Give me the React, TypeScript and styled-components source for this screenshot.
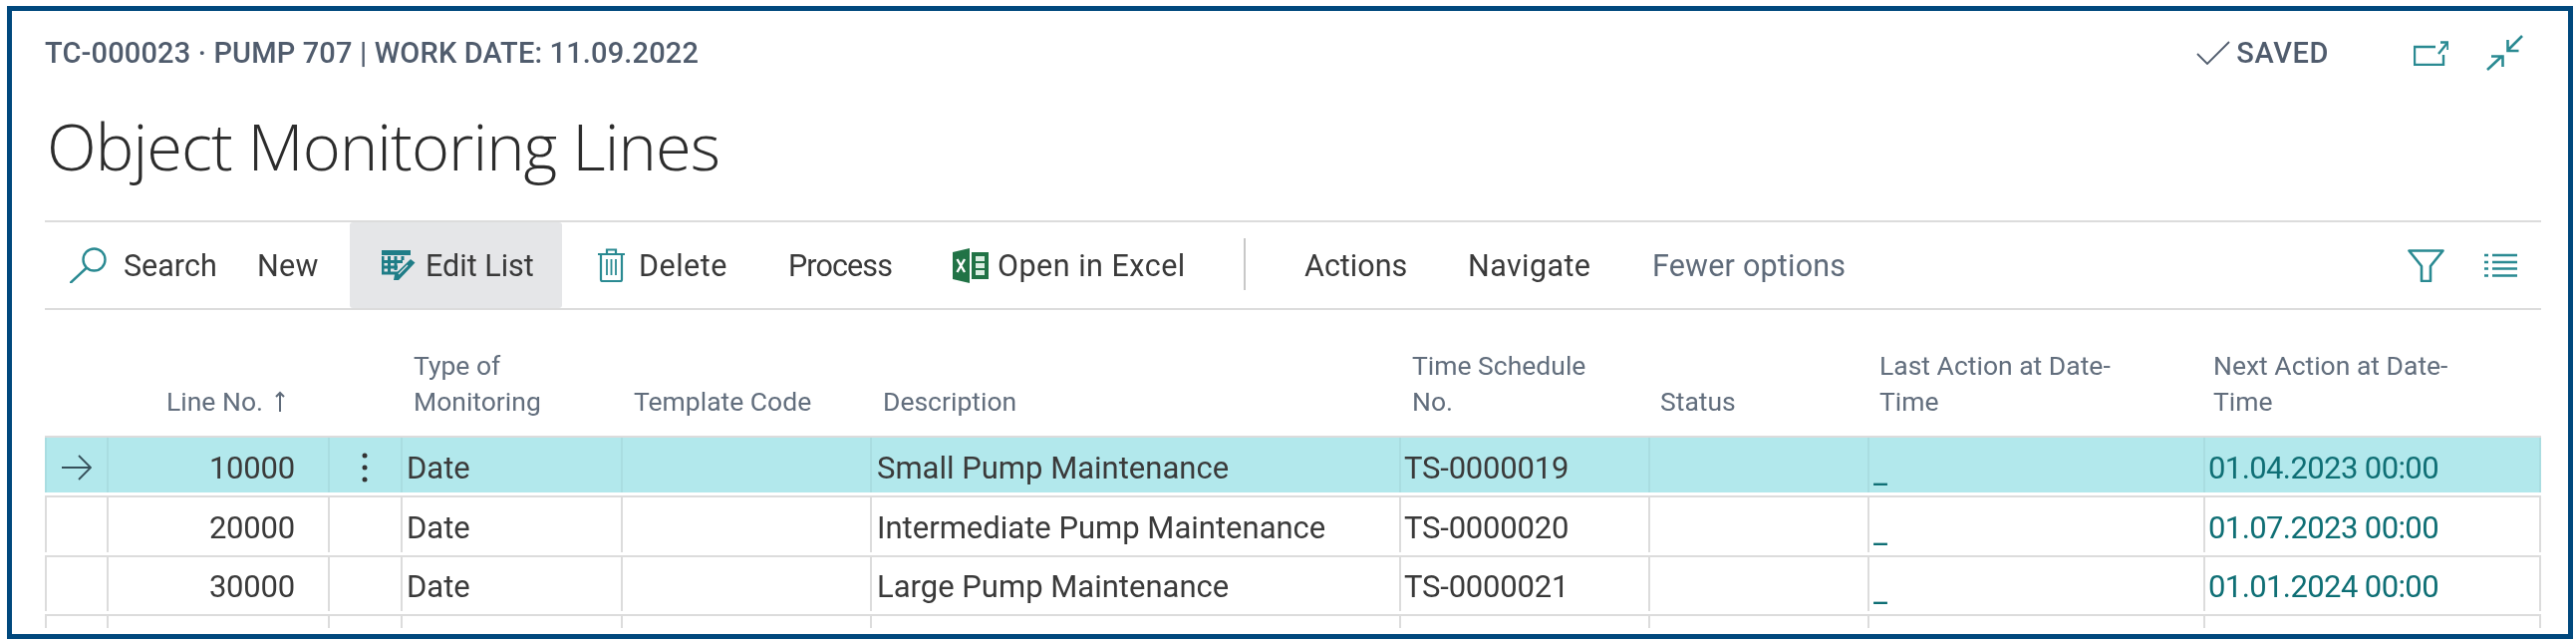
import React from "react";
import styled, { createGlobalStyle } from "styled-components";

const Global = createGlobalStyle`
  html, body { margin: 0; padding: 0; background: #fff; }
  body { font-family: Roboto, "Liberation Sans", sans-serif; }
`;

const Frame = styled.div`
  box-sizing: border-box;
  width: 2575px;
  height: 635px;
  margin: 6px 3px 3px 7px;
  border: 5px solid #00487d;
  padding: 0 27px 6px 33px;
  overflow: hidden;
  display: flex;
  flex-direction: column;
  filter: blur(0.45px);
`;
const Head = styled.header`
  height: 210px;
  display: flex;
  flex-direction: column;
`;
const TopRow = styled.div`
  display: flex;
  align-items: center;
  height: 34px;
  margin-top: 25px;
`;
const Crumb = styled.div`
  font-size: 29px;
  font-weight: 500;
  color: #505c6d;
  white-space: nowrap;
  letter-spacing: 0.15px;
`;
const Status = styled.div`
  margin-left: auto;
  display: flex;
  align-items: center;
  gap: 6px;
  font-size: 29px;
  font-weight: 500;
  color: #505c6d;
  letter-spacing: 0.6px;
`;
const HeadIcons = styled.div`
  display: flex;
  align-items: center;
  gap: 38px;
  margin-left: 85px;
  margin-right: 18px;
`;
const Title = styled.h1`
  margin: 31px 0 0 2px;
  font-family: "Open Sans", sans-serif;
  font-size: 65px;
  font-weight: 300;
  letter-spacing: -0.95px;
  line-height: 90px;
  color: #2c2c2c;
  white-space: nowrap;
`;
const Toolbar = styled.nav`
  box-sizing: border-box;
  height: 90px;
  border-top: 2px solid #dcdcdc;
  border-bottom: 2px solid #dcdcdc;
  display: flex;
  align-items: stretch;
`;
const ToolItem = styled.div<{ $w: number; $pad: number; $gap?: number; $track?: number; $active?: boolean; $muted?: boolean }>`
  box-sizing: border-box;
  width: ${(p) => p.$w}px;
  padding-left: ${(p) => p.$pad}px;
  display: flex;
  align-items: center;
  gap: ${(p) => p.$gap ?? 14}px;
  font-size: 30.5px;
  letter-spacing: ${(p) => p.$track ?? 0}px;
  color: ${(p) => (p.$muted ? "#5f6b7a" : "#3a3a3a")};
  background: ${(p) => (p.$active ? "#e5e6e8" : "transparent")};
  border-radius: 3px;
  white-space: nowrap;
`;
const ToolSep = styled.div`
  width: 2px;
  height: 52px;
  margin: 16px 0 0 20px;
  background: #c8c8c8;
`;
const ToolEnd = styled.div`
  margin-left: auto;
  padding-right: 24px;
  display: flex;
  align-items: center;
  gap: 40px;
`;
const cols = "62px 222px 73px 221px 250px 531px 250px 220px 337px 339px";
const HeaderRow = styled.div`
  height: 126px;
  display: grid;
  grid-template-columns: ${cols};
`;
const HeaderCell = styled.div<{ $right?: boolean; $left?: number }>`
  align-self: end;
  padding: 0 ${(p) => (p.$right ? "43px" : "0")} 16px ${(p) => (p.$right ? "0" : `${p.$left ?? 13}px`)};
  font-size: 26.5px;
  line-height: 36px;
  color: #626e7d;
  text-align: ${(p) => (p.$right ? "right" : "left")};
  white-space: nowrap;
`;
const Row = styled.div<{ $h: number }>`
  box-sizing: border-box;
  height: ${(p) => p.$h}px;
  border-top: 2px solid #dcdcdc;
  padding-bottom: 3px;
  display: grid;
  grid-template-columns: ${cols};
  &:last-child { padding-bottom: 0; }
`;
const Cell = styled.div<{ $sel?: boolean; $right?: boolean; $link?: boolean; $last?: boolean; $left?: number; $track?: number }>`
  box-sizing: border-box;
  display: flex;
  align-items: center;
  justify-content: ${(p) => (p.$right ? "flex-end" : "flex-start")};
  padding: 5px ${(p) => (p.$right ? "33px" : "0")} 0 ${(p) => (p.$right ? "0" : `${p.$left ?? 4}px`)};
  border-left: 2px solid ${(p) => (p.$sel ? "#a9dde1" : "#dcdcdc")};
  border-right: ${(p) => (p.$last ? `2px solid ${p.$sel ? "#a9dde1" : "#dcdcdc"}` : "0")};
  background: ${(p) => (p.$sel ? "#b2e8ec" : "transparent")};
  font-size: 31px;
  letter-spacing: ${(p) => p.$track ?? 0}px;
  color: ${(p) => (p.$link ? "#0f6f75" : "#3a3a3a")};
  white-space: nowrap;
  overflow: hidden;
`;
const Blank = styled.span`
  align-self: flex-end;
  line-height: 38px;
  color: #0f6f75;
`;

const T = "#2a8a92";
const Ico = styled.svg`
  display: block;
  flex: none;
`;
const SortGlyph = styled.svg`
  display: inline-block;
  margin: 0 0 -2px 12px;
`;

const SearchIcon = () => (
  <Ico width="37" height="36" viewBox="0 0 37 36" fill="none" stroke={T} strokeWidth="2.4">
    <circle cx="24.5" cy="12.5" r="11" />
    <path d="M16.5 21 1 35.5" strokeLinecap="round" />
  </Ico>
);
const EditListIcon = () => (
  <Ico width="34" height="30" viewBox="0 0 34 30" fill="none">
    <path d="M0 0h29v5H0z" fill="#1f7d87" />
    <path d="M1 6v17h17M1 11.500h20M1 17h15M7.500 6v17M14 6v14M21 6v4" stroke="#1f7d87" strokeWidth="3" />
    <path d="M29 9l4.500 3.500L17 30l-5 0 1-5.500z" fill="#1f7d87" />
    <path d="M17 24l9-9" stroke="#e5e6e8" strokeWidth="1.200" />
  </Ico>
);
const TrashIcon = () => (
  <Ico width="27" height="34" viewBox="0 0 27 34" fill="none" stroke={T} strokeWidth="2.200">
    <path d="M0 6h27M9 6V1.500h9V6M3 6v25.500q0 1.500 1.500 1.500h18q1.500 0 1.500-1.500V6" />
    <path d="M9 11v16M13.500 11v16M18 11v16" strokeWidth="1.800" />
  </Ico>
);
const ExcelIcon = () => (
  <Ico width="36" height="35" viewBox="0 0 36 35">
    <path d="M0 4 17 0v35L0 31z" fill="#217346" />
    <path d="M19 4h17v27H19z" fill="#217346" />
    <path d="M23 8h9v5h-9zM23 15h9v5h-9zM23 22h9v5h-9z" fill="#dcefe3" />
    <path d="M4.500 11l7.500 13M12 11 4.500 24" stroke="#fff" strokeWidth="2.400" />
  </Ico>
);
const FilterIcon = () => (
  <Ico width="37" height="33" viewBox="0 0 37 33" fill="none" stroke={T} strokeWidth="2.600">
    <path d="M1.500 1.500h34L23 17v15h-9V17z" strokeLinejoin="round" />
  </Ico>
);
const ListIcon = () => (
  <Ico width="33" height="24" viewBox="0 0 33 24" fill="none" stroke={T} strokeWidth="2.600">
    <path d="M0 2h4M8 2h25M0 9h4M8 9h25M0 15.500h4M8 15.500h25M0 22.500h4M8 22.500h25" />
  </Ico>
);
const OpenIcon = () => (
  <Ico width="35" height="25" viewBox="0 0 35 25" fill="none" stroke={T} strokeWidth="2.400">
    <path d="M22 6H1v18h29V14" />
    <path d="M25 13 34 2" />
    <path d="M27 1.500h7.500V9" />
  </Ico>
);
const CollapseIcon = () => (
  <Ico width="37" height="36" viewBox="0 0 37 36" fill="none" stroke={T} strokeWidth="2.600">
    <path d="M36 1 22 15M21.500 5v11h11" />
    <path d="M1 35 16 21M5 21.500h11.500V32" />
  </Ico>
);
const CheckIcon = () => (
  <Ico width="34" height="24" viewBox="0 0 34 24" fill="none" stroke="#505c6d" strokeWidth="1.800">
    <path d="M1 13l10 10L33 1" />
  </Ico>
);
const ArrowIcon = () => (
  <Ico width="30" height="26" viewBox="0 0 30 26" fill="none" stroke="#36505a" strokeWidth="1.800">
    <path d="M0 13h29M17 1l12 12-12 12" />
  </Ico>
);
const SortIcon = () => (
  <SortGlyph width="10" height="22" viewBox="0 0 10 22" fill="none" stroke="#5f6b7a" strokeWidth="2">
    <path d="M5 21V2M1 6l4-4 4 4" />
  </SortGlyph>
);
const DotsIcon = () => (
  <Ico width="6" height="30" viewBox="0 0 6 30" fill="#333">
    <circle cx="3" cy="3" r="2.500" />
    <circle cx="3" cy="15" r="2.500" />
    <circle cx="3" cy="27" r="2.500" />
  </Ico>
);

const rows = [
  { no: "10000", desc: "Small Pump Maintenance", ts: "TS-0000019", next: "01.04.2023 00:00", sel: true },
  { no: "20000", desc: "Intermediate Pump Maintenance", ts: "TS-0000020", next: "01.07.2023 00:00" },
  { no: "30000", desc: "Large Pump Maintenance", ts: "TS-0000021", next: "01.01.2024 00:00" },
];

export default function App() {
  return (
    <>
      <Global />
      <Frame>
        <Head>
          <TopRow>
            <Crumb>TC-000023 · PUMP 707 | WORK DATE: 11.09.2022</Crumb>
            <Status>
              <CheckIcon />
              SAVED
            </Status>
            <HeadIcons>
              <OpenIcon />
              <CollapseIcon />
            </HeadIcons>
          </TopRow>
          <Title>Object Monitoring Lines</Title>
        </Head>
        <Toolbar>
          <ToolItem $w={192} $pad={25} $gap={17}><SearchIcon />Search</ToolItem>
          <ToolItem $w={114} $pad={21} $track={0.3}>New</ToolItem>
          <ToolItem $w={213} $pad={32} $gap={10} $active><EditListIcon />Edit List</ToolItem>
          <ToolItem $w={198} $pad={36} $track={0.5}><TrashIcon />Delete</ToolItem>
          <ToolItem $w={162} $pad={29} $track={-0.9}>Process</ToolItem>
          <ToolItem $w={304} $pad={32} $gap={9} $track={0.5}><ExcelIcon />Open in Excel</ToolItem>
          <ToolSep />
          <ToolItem $w={190} $pad={59}>Actions</ToolItem>
          <ToolItem $w={190} $pad={33} $track={0.4}>Navigate</ToolItem>
          <ToolItem $w={250} $pad={28} $track={0.2} $muted>Fewer options</ToolItem>
          <ToolEnd>
            <FilterIcon />
            <ListIcon />
          </ToolEnd>
        </Toolbar>
        <HeaderRow>
          <HeaderCell />
          <HeaderCell $right>Line No.<SortIcon /></HeaderCell>
          <HeaderCell />
          <HeaderCell>Type of<br />Monitoring</HeaderCell>
          <HeaderCell>Template Code</HeaderCell>
          <HeaderCell>Description</HeaderCell>
          <HeaderCell>Time Schedule<br />No.</HeaderCell>
          <HeaderCell $left={12}>Status</HeaderCell>
          <HeaderCell $left={12}>Last Action at Date-<br />Time</HeaderCell>
          <HeaderCell $left={10}>Next Action at Date-<br />Time</HeaderCell>
        </HeaderRow>
        {rows.map((r, i) => (
          <Row key={r.no} $h={i === 2 ? 59 : 60}>
            <Cell $sel={r.sel} $left={15}>{r.sel && <ArrowIcon />}</Cell>
            <Cell $sel={r.sel} $right $track={-0.2}>{r.no}</Cell>
            <Cell $sel={r.sel} $left={32}>{r.sel && <DotsIcon />}</Cell>
            <Cell $sel={r.sel}>Date</Cell>
            <Cell $sel={r.sel} />
            <Cell $sel={r.sel} $left={5}>{r.desc}</Cell>
            <Cell $sel={r.sel} $left={3} $track={-0.2}>{r.ts}</Cell>
            <Cell $sel={r.sel} />
            <Cell $sel={r.sel}><Blank>_</Blank></Cell>
            <Cell $sel={r.sel} $link $last $left={3} $track={-0.6}>{r.next}</Cell>
          </Row>
        ))}
        <Row $h={14}>
          <Cell /><Cell /><Cell /><Cell /><Cell /><Cell /><Cell /><Cell /><Cell /><Cell $last />
        </Row>
      </Frame>
    </>
  );
}
